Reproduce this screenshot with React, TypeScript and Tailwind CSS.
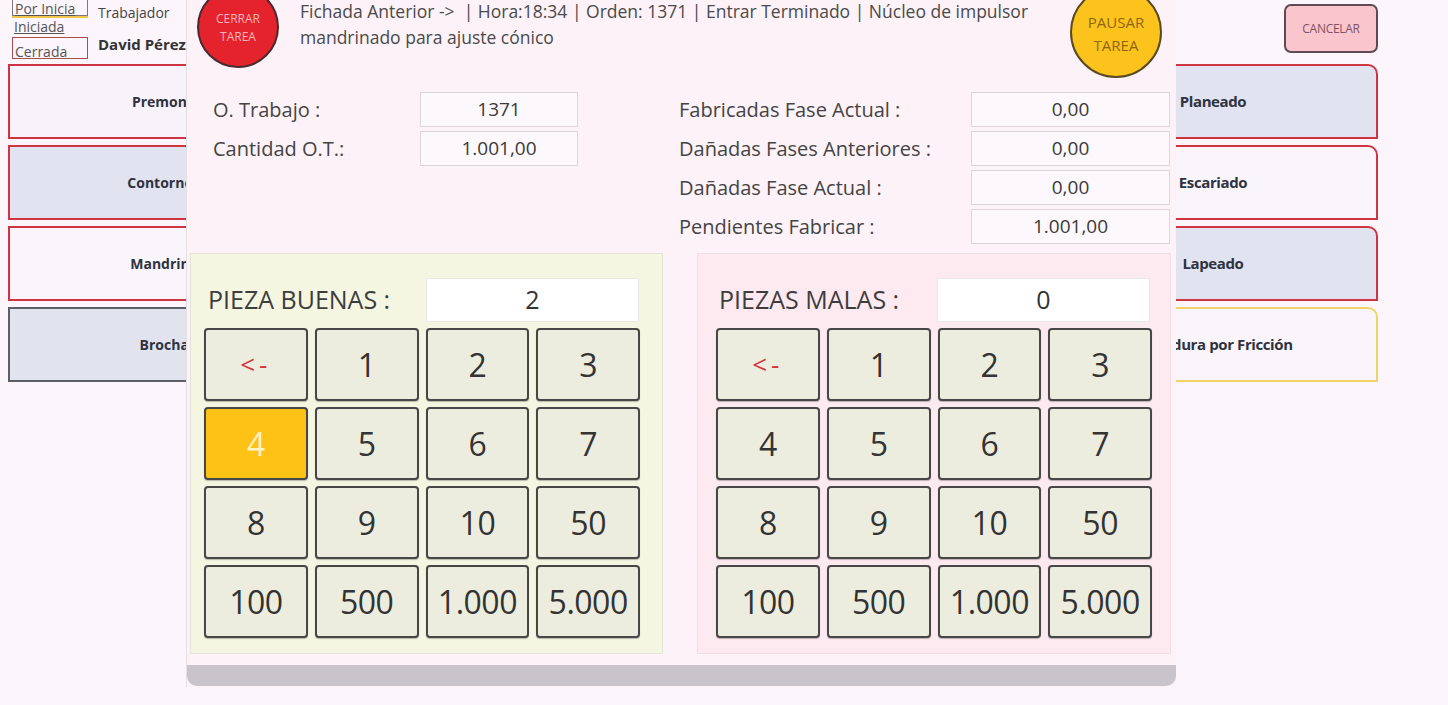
import React from "react";

const leftTasks = [
  { label: "Premontaje", bg: "bg-[#f8f3fa]", border: "border-[#cf3442]" },
  { label: "Contorneado", bg: "bg-[#e1e3f0]", border: "border-[#cf3442]" },
  { label: "Mandrinado", bg: "bg-[#faf5fb]", border: "border-[#cf3442]" },
  { label: "Brochado", bg: "bg-[#e1e4ef]", border: "border-[#5c5f66]" },
];

const rightTasks = [
  { label: "Planeado", bg: "bg-[#e1e3f0]", border: "border-[#cf3442]" },
  { label: "Escariado", bg: "bg-[#faf5fb]", border: "border-[#cf3442]" },
  { label: "Lapeado", bg: "bg-[#e1e3f0]", border: "border-[#cf3442]" },
  { label: "Soldadura por Fricción", bg: "bg-[#f9f5fb]", border: "border-[#f0d46a]" },
];

const keys = ["<-", "1", "2", "3", "4", "5", "6", "7", "8", "9", "10", "50", "100", "500", "1.000", "5.000"];

export default function App() {
  return (
    <div className="relative h-[705px] w-[1448px] overflow-hidden bg-[#fcf5fb] font-['Open_Sans',sans-serif] text-[#444]">
      {/* top bar behind the dialog */}
      <div className="flex h-[64px] items-start pr-[70px]">
        <div className="ml-[12px] -mt-[4px] flex w-[76px] flex-col text-[14px] leading-[15px] text-[#555]">
          <div className="h-[20px] border border-[#7a7a7a] px-[2px] pt-[4px] underline">Por Inicia</div>
          <div className="h-[20px] border-t-2 border-[#f2c64d] px-[2px] pt-[1px] underline">Iniciada</div>
          <div className="mt-[1px] h-[22px] border border-[#a4504f] px-[2px] pt-[6px]">Cerrada</div>
        </div>
        <div className="ml-[10px] flex flex-col whitespace-nowrap text-[14px]">
          <span className="mt-[2px]">Trabajador</span>
          <span className="mt-[10px] text-[15px] font-bold text-[#333]">David Pérez</span>
        </div>
        <div className="ml-auto mt-[4px] flex h-[49px] w-[94px] items-center justify-center rounded-[7px] border-2 border-[#5d4a52] bg-[#fbc5cd] text-[12px] tracking-tight text-[#7d5462]">
          CANCELAR
        </div>
      </div>

      {/* task buttons behind the dialog */}
      <div className="flex justify-between pl-[8px] pr-[70px]">
        <div className="flex w-[330px] flex-col gap-[6px]">
          {leftTasks.map((t) => (
            <div
              key={t.label}
              className={`flex h-[75px] items-center justify-center border-2 ${t.border} ${t.bg} text-[14px] font-bold text-[#2f3240]`}
            >
              {t.label}
            </div>
          ))}
        </div>
        <div className="flex w-[330px] flex-col gap-[6px]">
          {rightTasks.map((t) => (
            <div
              key={t.label}
              className={`flex h-[75px] items-center justify-center rounded-tr-[10px] border-2 ${t.border} ${t.bg} text-[15px] font-bold tracking-[-0.4px] text-[#2f3240]`}
            >
              {t.label}
            </div>
          ))}
        </div>
      </div>

      {/* dialog */}
      <div className="absolute left-[186px] top-0 flex h-[687px] w-[990px] flex-col border-l border-[#e6dfe4] bg-[#fcf2f8]">
        <div className="flex h-[92px] items-start">
          <div className="ml-[10px] -mt-[14px] flex h-[82px] w-[82px] shrink-0 flex-col items-center justify-center rounded-full border-2 border-[#4a2a2c] bg-[#e4232d] pt-[2px] text-[12px] leading-[18px] text-[#f7b3bb]">
            <span>CERRAR</span>
            <span>TAREA</span>
          </div>
          <div className="ml-[21px] -mt-[2px] w-[745px] text-[17.5px] leading-[26px] text-[#4a4a4a]">
            Fichada Anterior -&gt;&nbsp; | Hora:18:34 | Orden: 1371 | Entrar Terminado | Núcleo de impulsor mandrinado para ajuste cónico
          </div>
          <div className="ml-auto mr-[14px] -mt-[14px] flex h-[92px] w-[92px] shrink-0 flex-col items-center justify-center rounded-full border-2 border-[#5a4a20] bg-[#fcc31c] pt-[4px] text-[15px] leading-[23px] text-[#8e6614]">
            <span>PAUSAR</span>
            <span>TAREA</span>
          </div>
        </div>

        <div className="flex h-[152px] text-[20px] text-[#444]">
          <div className="ml-[26px] flex flex-col gap-[4px]">
            <InfoRow label="O. Trabajo :" value="1371" labelW="w-[207px]" boxW="w-[158px]" />
            <InfoRow label="Cantidad O.T.:" value="1.001,00" labelW="w-[207px]" boxW="w-[158px]" />
          </div>
          <div className="ml-[101px] flex flex-col gap-[4px]">
            <InfoRow label="Fabricadas Fase Actual :" value="0,00" labelW="w-[292px]" boxW="w-[199px]" />
            <InfoRow label="Dañadas Fases Anteriores :" value="0,00" labelW="w-[292px]" boxW="w-[199px]" />
            <InfoRow label="Dañadas Fase Actual :" value="0,00" labelW="w-[292px]" boxW="w-[199px]" />
            <InfoRow label="Pendientes Fabricar :" value="1.001,00" labelW="w-[292px]" boxW="w-[199px]" />
          </div>
        </div>

        <div className="ml-[3px] mt-[9px] flex gap-[34px]">
          <Keypad
            title="PIEZA BUENAS :"
            value="2"
            panel="w-[473px] bg-[#f4f6e2] border-[#e3e4d8] pl-[13px]"
            titleOffset="ml-[4px] w-[218px]"
            active="4"
          />
          <Keypad
            title="PIEZAS MALAS :"
            value="0"
            panel="w-[474px] bg-[#fde9f0] border-[#f1dfe6] pl-[18px]"
            titleOffset="ml-[3px] w-[218px]"
          />
        </div>

        <div className="mt-[11px] h-[21px] rounded-b-[10px] bg-[#c9c4cb]" />
      </div>
    </div>
  );
}

function InfoRow({ label, value, labelW, boxW }: { label: string; value: string; labelW: string; boxW: string }) {
  return (
    <div className="flex h-[35px] items-center">
      <span className={`${labelW} whitespace-nowrap`}>{label}</span>
      <div className={`flex h-[35px] ${boxW} items-center justify-center border border-[#dcd6da] bg-[#fdf8fb] text-[19px] text-[#3a3a3a]`}>
        {value}
      </div>
    </div>
  );
}

function Keypad({
  title,
  value,
  panel,
  titleOffset,
  active,
}: {
  title: string;
  value: string;
  panel: string;
  titleOffset: string;
  active?: string;
}) {
  return (
    <div className={`flex h-[401px] flex-col border pt-[24px] ${panel}`}>
      <div className="flex h-[44px] items-center">
        <span className={`${titleOffset} whitespace-nowrap text-[25px] text-[#3d3d3d]`}>{title}</span>
        <div className="flex h-[44px] w-[213px] items-center justify-center border border-[#e8e8e8] bg-white text-[25px] text-[#333]">
          {value}
        </div>
      </div>
      <div className="mt-[6px] grid w-[436px] grid-cols-4 gap-x-[7px] gap-y-[6px]">
        {keys.map((k) => {
          const isActive = k === active;
          const isBack = k === "<-";
          return (
            <div
              key={k}
              className={`flex h-[73px] items-center justify-center rounded-[4px] border-2 border-[#474747] shadow-[0_1px_1px_rgba(0,0,0,0.25)] ${
                isActive ? "bg-[#fdc215] text-[#fff2c4]" : "bg-[#ededdf] text-[#333]"
              } ${isBack ? "text-[26px] tracking-[4px] text-[#d8333b]" : "text-[32px] tracking-[-0.5px]"}`}
            >
              {k}
            </div>
          );
        })}
      </div>
    </div>
  );
}
